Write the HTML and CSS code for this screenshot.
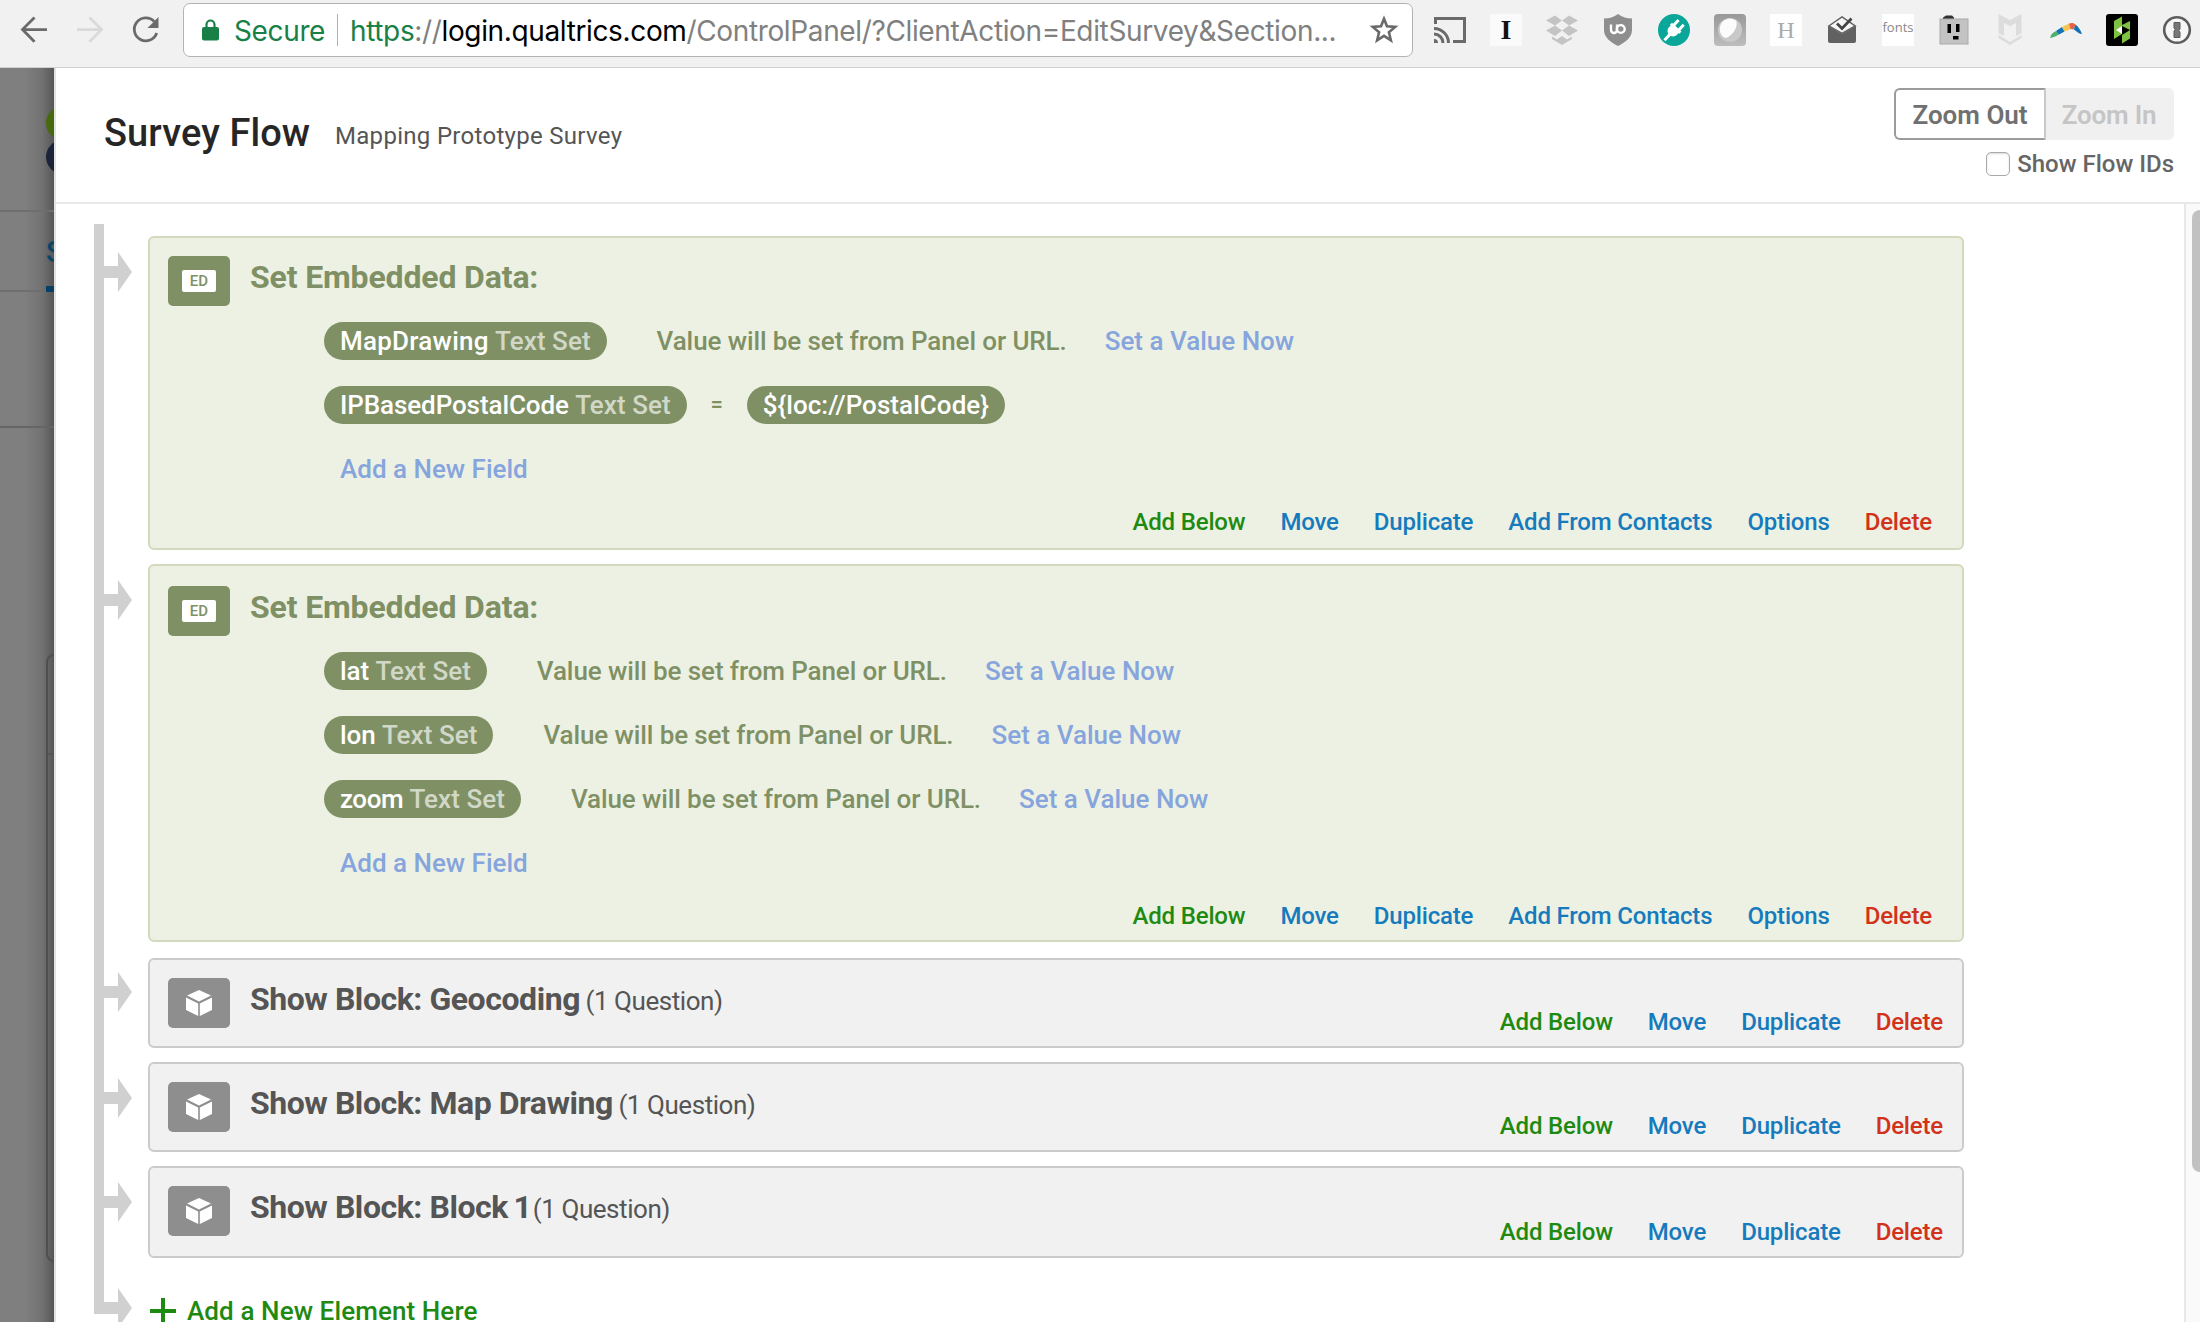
FILE: index.html
```html
<!DOCTYPE html>
<html lang="en">
<head>
<meta charset="utf-8">
<title>Survey Flow</title>
<link rel="stylesheet" href="styles.css">
</head>
<body>
<header class="toolbar">
  <div class="nav">
    <svg width="32" height="32" viewBox="0 0 32 32" fill="none" stroke="#6a6a6a" stroke-width="2.8"><path d="M29 15.6H5M16.500 3.500L4.500 15.600L16.500 27.700"/></svg>
    <svg width="32" height="32" viewBox="0 0 32 32" fill="none" stroke="#d9d9d9" stroke-width="2.800"><path d="M3 15.600H27M15.500 3.500L27.500 15.600L15.500 27.700"/></svg>
    <svg width="32" height="32" viewBox="0 0 32 32"><path d="M24.200 7.500A11.500 11.500 0 1 0 26.700 19" fill="none" stroke="#6a6a6a" stroke-width="2.800"/><path d="M28.500 3v11H17.500z" fill="#6a6a6a"/></svg>
  </div>
  <div class="address">
    <svg class="lock" width="17" height="22" viewBox="0 0 17 22"><path d="M4.500 9V5.500a4 4 0 0 1 8 0V9" fill="none" stroke="#188046" stroke-width="2.200"/><rect y="8" width="17" height="13.500" rx="2" fill="#188046"/></svg>
    <span class="secure">Secure</span>
    <span class="divider"></span>
    <span class="url"><span class="scheme">https</span>://<span class="host">login.qualtrics.com</span>/ControlPanel/?ClientAction=EditSurvey&amp;Section...</span>
    <svg class="star" width="30" height="30" viewBox="0 0 30 30"><path d="M15 3.800L18 11.300L26.200 11.900L19.900 17.200L21.900 25.300L15 20.900L8.100 25.300L10.100 17.200L3.800 11.900L12 11.300Z" fill="none" stroke="#6a6a6a" stroke-width="2.600"/></svg>
  </div>
  <div class="extensions">
    <svg viewBox="0 0 32 32" fill="none" stroke="#6a6a6a" stroke-width="3"><path d="M1.500 10V4.500H30.500V27.500H19"/><path d="M0 14.500A14.500 14.500 0 0 1 14.500 29M0 20A9 9 0 0 1 9 29"/><path d="M0 25a4 4 0 0 1 4 4H0z" fill="#6a6a6a" stroke="none"/></svg>
    <span class="ext ext-i">I</span>
    <svg viewBox="0 0 32 32" fill="#c4c4c4"><path d="M9 1.500L16 6.500L9 11.500L0 6.500zM23 1.500L32 6.500L23 11.500L16 6.500zM9 11.500L16 16.500L9 22L0 16.500zM23 11.500L32 16.500L23 22L16 16.500zM16 23.500L22 19.800M16 22L21 25.500L26 22.500V25L16 31L6 25V22.500L11 25.500z"/></svg>
    <svg viewBox="0 0 32 32"><path d="M16 0C20 3 25 4.500 30 4.500V16C30 23 24 28 16 32C8 28 2 23 2 16V4.500C7 4.500 12 3 16 0z" fill="#8e8e8e"/><path d="M9 10.500V16a3 3 0 0 0 6 0V10.500" fill="none" stroke="#fff" stroke-width="2.400"/><circle cx="18.800" cy="15" r="3.900" fill="none" stroke="#fff" stroke-width="2.400"/></svg>
    <svg viewBox="0 0 32 32"><circle cx="16" cy="16" r="16" fill="#09a699"/><g transform="rotate(43 16 16)" fill="#fff"><path d="M9.500 12h13v3H21.500v2.500a5.500 5.500 0 0 1-11 0V15H9.500zM11 5.500h3V12h-3zM18 5.500h3V12h-3zM14.500 22h3v8h-3z"/></g></svg>
    <svg viewBox="0 0 32 32"><defs><linearGradient id="orb" x2="0" y2="1"><stop stop-color="#989898"/><stop offset="1" stop-color="#bdbdbd"/></linearGradient></defs><rect width="32" height="32" rx="4" fill="url(#orb)"/><circle cx="16" cy="16" r="12" fill="#c9c9c9"/><path d="M22 6.500C16 3 9 5 6.500 11C4.500 17 7 23 12 24C18 22 25 13 22 6.500z" fill="#fcfcfc"/></svg>
    <span class="ext ext-h">H</span>
    <svg viewBox="0 0 32 32"><path d="M2 12V27a2 2 0 0 0 2 2H28a2 2 0 0 0 2-2V12L16 20z" fill="#616161"/><path d="M2.800 12L16 3L29.200 12L16 19.500z" fill="#f6f6f6" stroke="#616161" stroke-width="1.500"/><path d="M11 9.500L16 14.500L25.500 4.500" fill="none" stroke="#444" stroke-width="2.800"/></svg>
    <span class="ext ext-fonts">fonts</span>
    <svg viewBox="0 0 32 32"><path d="M5 5V3.500L8 1.500H14L16 3.500V5z" fill="#333"/><rect x="2" y="5" width="28" height="25" fill="#c3c3c3" stroke="#aaa"/><path d="M9.500 10h3.500v9H9.500zM18 10h3.500v8H18zM15 22h5.500v3.500H15z" fill="#000"/></svg>
    <svg viewBox="0 0 32 32" fill="#dcdcdc"><path d="M4.500 0L16 6L27.500 0V19L22 22V9L16 12L10 9V22L4.500 19zM4.500 21L16 28L27.500 21V24L16 31L4.500 24z"/></svg>
    <svg viewBox="0 0 32 32"><path d="M0 24C1 20 3 18.500 6 17L9 20.500C6 22.500 3 23.500 0 24z" fill="#4caf6e"/><path d="M6 17L12 13L14.500 17.500L9 20.500z" fill="#1072b8"/><path d="M12 13L19 9.500L21 15L14.500 17.500z" fill="#f5c552"/><path d="M19 9.500C22 8.500 24 9 25.500 10.500L24 15.500L20.500 15z" fill="#e8604c"/><path d="M25.500 10.500C28 12.500 30.500 16 32 20C29.500 20 27 18 24 15.500z" fill="#1072b8"/></svg>
    <svg viewBox="0 0 32 32"><rect width="32" height="32" rx="3" fill="#000"/><path d="M8 7L16 2.500V11L24 7V16L16 12V20L8 16z" fill="#7fc241"/><path d="M8 16L16 12V20L8 25zM16 21L24 16V24.500L16 29.500z" fill="#7fc241"/><path d="M10 16L16 12V20z" fill="#fff"/></svg>
    <svg viewBox="0 0 32 32"><circle cx="15" cy="16" r="12.800" fill="#f6f6f6" stroke="#5c5c5c" stroke-width="2.600"/><path d="M12 8.500h6V15L16.800 16.500L18 18V23.500H12V17L13.200 15.500L12 14z" fill="#777" stroke="#5c5c5c"/></svg>
  </div>
</header>

<div class="viewport">
  <aside class="backdrop">
    <div class="brand">
      <svg width="16" height="80" viewBox="0 0 16 80"><circle cx="17" cy="16" r="17" fill="#476a10"/><circle cx="17" cy="50" r="17" fill="#1d2338"/></svg>
    </div>
    <div class="tabs"><span class="tab">S</span></div>
    <div class="subbar"></div>
    <div class="page"><div class="sheet"></div></div>
  </aside>

  <main class="dialog">
    <header class="dialog-head">
      <h1>Survey Flow</h1>
      <span class="survey-name">Mapping Prototype Survey</span>
      <div class="controls">
        <div class="zoom"><button class="zoom-out">Zoom Out</button><button class="zoom-in" disabled>Zoom In</button></div>
        <label class="flow-ids"><span class="check"></span>Show Flow IDs</label>
      </div>
    </header>

    <div class="dialog-body">
      <div class="flow">
        <section class="row">
          <span class="branch"></span>
          <article class="card data">
            <div class="card-head"><span class="badge"><span class="plate">ED</span></span><h2>Set Embedded Data:</h2></div>
            <div class="fields">
              <div class="field"><span class="pill"><span class="wide">MapDrawing</span> <em>Text Set</em></span><span class="note">Value will be set from Panel or URL.</span><a class="soft">Set a Value Now</a></div>
              <div class="field"><span class="pill">IPBasedPostalCode <em>Text Set</em></span><span class="eq">=</span><span class="pill value">${loc://PostalCode}</span></div>
              <div class="field"><a class="soft new">Add a New Field</a></div>
            </div>
            <nav class="actions"><a class="add">Add Below</a><a>Move</a><a>Duplicate</a><a>Add From Contacts</a><a>Options</a><a class="delete">Delete</a></nav>
          </article>
        </section>
        <section class="row">
          <span class="branch"></span>
          <article class="card data second">
            <div class="card-head"><span class="badge"><span class="plate">ED</span></span><h2>Set Embedded Data:</h2></div>
            <div class="fields">
              <div class="field"><span class="pill">lat <em>Text Set</em></span><span class="note">Value will be set from Panel or URL.</span><a class="soft">Set a Value Now</a></div>
              <div class="field"><span class="pill">lon <em>Text Set</em></span><span class="note">Value will be set from Panel or URL.</span><a class="soft">Set a Value Now</a></div>
              <div class="field"><span class="pill"><span class="tight">zoom</span> <em>Text Set</em></span><span class="note">Value will be set from Panel or URL.</span><a class="soft">Set a Value Now</a></div>
              <div class="field"><a class="soft new">Add a New Field</a></div>
            </div>
            <nav class="actions"><a class="add">Add Below</a><a>Move</a><a>Duplicate</a><a>Add From Contacts</a><a>Options</a><a class="delete">Delete</a></nav>
          </article>
        </section>
        <section class="row first-block">
          <span class="branch"></span>
          <article class="card block">
            <div class="card-head"><span class="badge"><svg width="28" height="28" viewBox="0 0 28 28" fill="#fff"><path d="M14 1L26 6.500L14 12.500L2 6.500zM1 8.500L13.200 14.500V27L1 21zM27 8.500L14.800 14.500V27L27 21z"/></svg></span><h2>Show Block: Geocoding <small>(1 Question)</small></h2></div>
            <nav class="actions"><a class="add">Add Below</a><a>Move</a><a>Duplicate</a><a class="delete">Delete</a></nav>
          </article>
        </section>
        <section class="row">
          <span class="branch"></span>
          <article class="card block">
            <div class="card-head"><span class="badge"><svg width="28" height="28" viewBox="0 0 28 28" fill="#fff"><path d="M14 1L26 6.500L14 12.500L2 6.500zM1 8.500L13.200 14.500V27L1 21zM27 8.500L14.800 14.500V27L27 21z"/></svg></span><h2>Show Block: Map Drawing <small>(1 Question)</small></h2></div>
            <nav class="actions"><a class="add">Add Below</a><a>Move</a><a>Duplicate</a><a class="delete">Delete</a></nav>
          </article>
        </section>
        <section class="row">
          <span class="branch"></span>
          <article class="card block tall">
            <div class="card-head"><span class="badge"><svg width="28" height="28" viewBox="0 0 28 28" fill="#fff"><path d="M14 1L26 6.500L14 12.500L2 6.500zM1 8.500L13.200 14.500V27L1 21zM27 8.500L14.800 14.500V27L27 21z"/></svg></span><h2>Show Block: Block <span class="digit">1</span> <small>(1 Question)</small></h2></div>
            <nav class="actions"><a class="add">Add Below</a><a>Move</a><a>Duplicate</a><a class="delete">Delete</a></nav>
          </article>
        </section>
        <section class="row last">
          <span class="branch"></span>
          <a class="new-element"><svg width="26" height="26" viewBox="0 0 26 26"><path d="M13 0v26M0 13h26" stroke="#1e8a11" stroke-width="4"/></svg>Add a New Element Here</a>
        </section>
      </div>
      <div class="scrollbar"><span class="thumb"></span></div>
    </div>
  </main>
</div>
</body>
</html>
```

FILE: styles.css
```css
* { box-sizing: border-box; }
html, body { margin: 0; height: 1322px; overflow: hidden; }
body { display: flex; flex-direction: column; background: #fff; font-family: Roboto, sans-serif; font-weight: 500; color: #555; }
h1, h2 { margin: 0; }

/* browser toolbar */
.toolbar { flex: none; display: flex; height: 68px; background: #f1f1f1; border-bottom: 1px solid #cfcfcf; }
.nav { display: flex; gap: 24px; width: 183px; padding: 14px 0 0 18px; }
.address { display: flex; align-items: center; width: 1230px; height: 54px; margin-top: 3px; padding: 0 13px 0 18px; background: #fff; border: 1px solid #b3b3b3; border-radius: 7px; font: 400 28px/52px Inter, sans-serif; letter-spacing: -0.36px; white-space: nowrap; }
.lock { margin-right: 15px; }
.secure { width: 103px; padding-top: 2px; color: #188046; }
.divider { width: 1px; height: 32px; margin-right: 12px; background: #b0b0b0; }
.url { padding-top: 2px; color: #808080; }
.scheme { color: #188046; }
.host { color: #000; }
.star { margin-left: auto; }
.extensions { display: flex; gap: 24px; padding: 14px 0 0 21px; }
.extensions svg, .ext { flex: none; width: 32px; height: 32px; }
.ext { background: #fff; text-align: center; overflow: hidden; }
.ext-i { background: #fafafa; color: #111; font: 700 28px/32px "Liberation Serif", serif; }
.ext-h { color: #aaa; font: 400 24px/32px "Liberation Serif", serif; }
.ext-fonts { color: #888; font: 400 13px/26px "Open Sans", sans-serif; }

/* dimmed page behind the dialog */
.viewport { display: flex; flex: 1; min-height: 0; }
.backdrop { display: flex; flex-direction: column; flex: none; width: 54px; overflow: hidden; background: linear-gradient(90deg, transparent 24px, rgba(0, 0, 0, .1) 42px, rgba(0, 0, 0, .32) 54px), #7f7f7f; }
.brand { height: 144px; padding: 39px 0 0 46px; border-bottom: 2px solid #6e6e6e; }
.tabs { height: 80px; padding-left: 46px; border-bottom: 2px solid #6e6e6e; }
.tab { display: block; height: 80px; border-bottom: 6px solid #083f64; color: #0b4468; font-size: 29px; line-height: 80px; }
.subbar { height: 136px; border-bottom: 2px solid #656565; }
.page { flex: 1; padding: 226px 0 0 46px; }
.sheet { width: 60px; height: 608px; border: 2px solid #4f4f4f; border-radius: 8px; background: linear-gradient(#565656, #565656) 0 97px / 100% 2px no-repeat; }

/* dialog */
.dialog { display: flex; flex-direction: column; flex: 1; min-width: 0; border-left: 2px solid #e3e3e3; background: #fff; }
.dialog-head { display: flex; flex: none; height: 136px; padding-left: 48px; border-bottom: 2px solid #e8e8e8; }
h1 { width: 230px; color: #262626; font-size: 38px; font-weight: 500; line-height: 130px; letter-spacing: .1px; white-space: nowrap; }
.survey-name { padding-left: 1px; font-size: 24px; font-weight: 400; line-height: 136px; letter-spacing: .3px; }
.controls { display: flex; flex-direction: column; align-items: flex-end; margin-left: auto; padding: 20px 26px 0 0; }
.zoom { display: flex; }
.zoom button { height: 52px; padding: 0; font: 600 26px/30px Roboto, sans-serif; }
.zoom .zoom-out { width: 152px; padding-top: 2px; border: 2px solid #9b9b9b; border-right-color: #c9c9c9; border-radius: 6px 0 0 6px; background: #fff; color: #707070; }
.zoom .zoom-in { width: 128px; padding: 2px 2px 0 0; border: 0; border-radius: 0 6px 6px 0; background: #f0f0f0; color: #c5c5c5; letter-spacing: -.2px; }
.flow-ids { display: flex; align-items: center; height: 24px; margin-top: 12px; color: #666; font-size: 24px; line-height: 24px; }
.check { width: 24px; height: 24px; margin-right: 7px; border: 1px solid #aaa; border-radius: 5px; background: #fff; box-shadow: inset 0 1px 2px rgba(0, 0, 0, .15); }
.dialog-body { display: flex; flex: 1; min-height: 0; }
.flow { flex: 1; padding: 20px 0 0 38px; }

/* flow rows */
.row { display: grid; grid-template-columns: 54px 1816px; padding-bottom: 2px; }
.branch { background: linear-gradient(#d0d0d0, #d0d0d0) 0 0 / 10px 100% no-repeat; margin-bottom: -2px; }
.branch::before { content: ""; display: block; width: 38px; height: 40px; margin-top: 28px; background: #d0d0d0; clip-path: polygon(0 14px, 24px 14px, 24px 0, 38px 20px, 24px 40px, 24px 26px, 0 26px); }
.card { margin-top: 12px; border: 2px solid; border-radius: 6px; }
.first-block .card { margin-top: 14px; }
.card-head { display: flex; height: 50px; }
.badge { display: flex; align-items: center; justify-content: center; width: 62px; height: 50px; margin-right: 20px; border-radius: 5px; }
.plate { width: 34px; height: 22px; border-radius: 2px; background: #fff; font: 500 15px/22px Roboto, sans-serif; text-align: center; }
h2 { font-size: 32px; font-weight: 700; line-height: 42px; letter-spacing: -.15px; white-space: nowrap; }
.data { padding: 18px 30px 14px 18px; border-color: #d2d9bd; background: #edf1e3; color: #7f9065; }
.data .badge { background: #7f9065; }
.second { padding: 20px 30px 12px 18px; }
.fields { display: flex; flex-direction: column; gap: 26px; margin: 16px 0 22px 156px; font-size: 26px; line-height: 38px; letter-spacing: -.1px; }
.field { display: flex; height: 38px; white-space: nowrap; }
.pill { padding: 0 16px; border-radius: 19px; background: #7f9065; color: #fff; }
.pill em { color: #d2d8c8; font-style: normal; letter-spacing: .05px; }
.wide { letter-spacing: .25px; }
.tight { letter-spacing: -.5px; }
.value { letter-spacing: .05px; }
.note { margin: 0 38px 0 50px; }
.eq { width: 60px; text-align: center; font-size: 22px; }
.soft { color: #86a5dd; letter-spacing: 0; }
.new { margin-left: 16px; }
.actions { display: flex; justify-content: flex-end; gap: 35px; color: #167bbd; font-size: 24px; line-height: 24px; letter-spacing: -.17px; }
.add { color: #1e8a11; }
.delete { color: #d2321a; }
.block { display: flex; justify-content: space-between; height: 90px; padding: 18px 19px 12px 18px; border-color: #cbcbcb; background: #f1f1f1; color: #555; }
.block .badge { background: #8e8e8e; }
.block h2 { letter-spacing: -.45px; }
.block .actions { align-self: flex-end; }
.tall { height: 92px; }
small { margin-left: -2px; font-size: 26px; font-weight: 400; }
.digit { margin: 0 -4px 0 -2px; }
.last .branch { height: 54px; }
.last .branch::before { margin-top: 28px; }
.new-element { display: flex; align-items: center; gap: 11px; height: 38px; margin-top: 32px; padding-left: 2px; color: #1e8a11; font-size: 26px; line-height: 38px; letter-spacing: .1px; }
.scrollbar { flex: none; width: 16px; padding: 6px 0 0 6px; overflow: hidden; border-left: 2px solid #e8e8e8; background: #fafafa; }
.thumb { display: block; width: 16px; height: 962px; border-radius: 8px; background: #c1c1c1; }
```
